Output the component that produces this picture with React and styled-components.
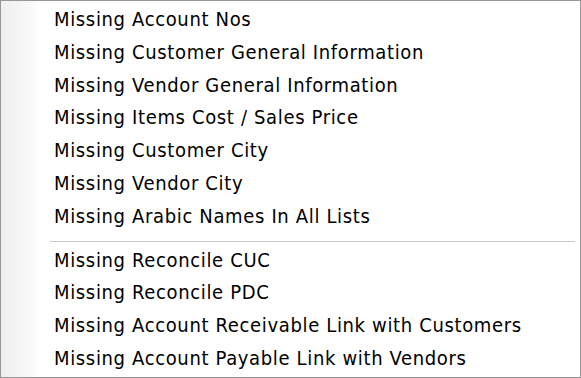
import React from "react";
import styled, { createGlobalStyle } from "styled-components";

const Global = createGlobalStyle`
  html, body { margin: 0; padding: 0; background: #ffffff; }
  #root { width: 581px; height: 378px; }
`;

const Menu = styled.div`
  box-sizing: border-box;
  width: 581px;
  height: 378px;
  border: 1px solid #979797;
  background: #ffffff;
  display: grid;
  grid-template-columns: 35px 1fr;
  overflow: hidden;
`;

const Gutter = styled.div`
  background: linear-gradient(to right, #efefef 0%, #f6f6f6 60%, #fbfbfb 100%);
`;

const List = styled.div`
  display: flex;
  flex-direction: column;
  padding-top: 2px;
`;

const Item = styled.div`
  height: 32.8px;
  line-height: 32.8px;
  padding-left: 18px;
  font-family: "DejaVu Sans Condensed", "DejaVu Sans", sans-serif;
  font-size: 20px;
  letter-spacing: 0.65px;
  color: #000000;
  white-space: nowrap;
`;

const Separator = styled.div`
  margin: 8px 5px 0 14px;
  height: 1px;
  border-top: 1px solid #c8c8c8;
  border-bottom: 1px solid #ffffff;
`;

const groupA = [
  "Missing Account Nos",
  "Missing Customer General Information",
  "Missing Vendor General Information",
  "Missing Items Cost / Sales Price",
  "Missing Customer City",
  "Missing Vendor City",
  "Missing Arabic Names In All Lists",
];

const groupB = [
  "Missing Reconcile CUC",
  "Missing Reconcile PDC",
  "Missing Account Receivable Link with Customers",
  "Missing Account Payable Link with Vendors",
];

export default function App() {
  return (
    <>
      <Global />
      <Menu>
        <Gutter />
        <List>
          {groupA.map((t) => (
            <Item key={t}>{t}</Item>
          ))}
          <Separator />
          {groupB.map((t) => (
            <Item key={t}>{t}</Item>
          ))}
        </List>
      </Menu>
    </>
  );
}
